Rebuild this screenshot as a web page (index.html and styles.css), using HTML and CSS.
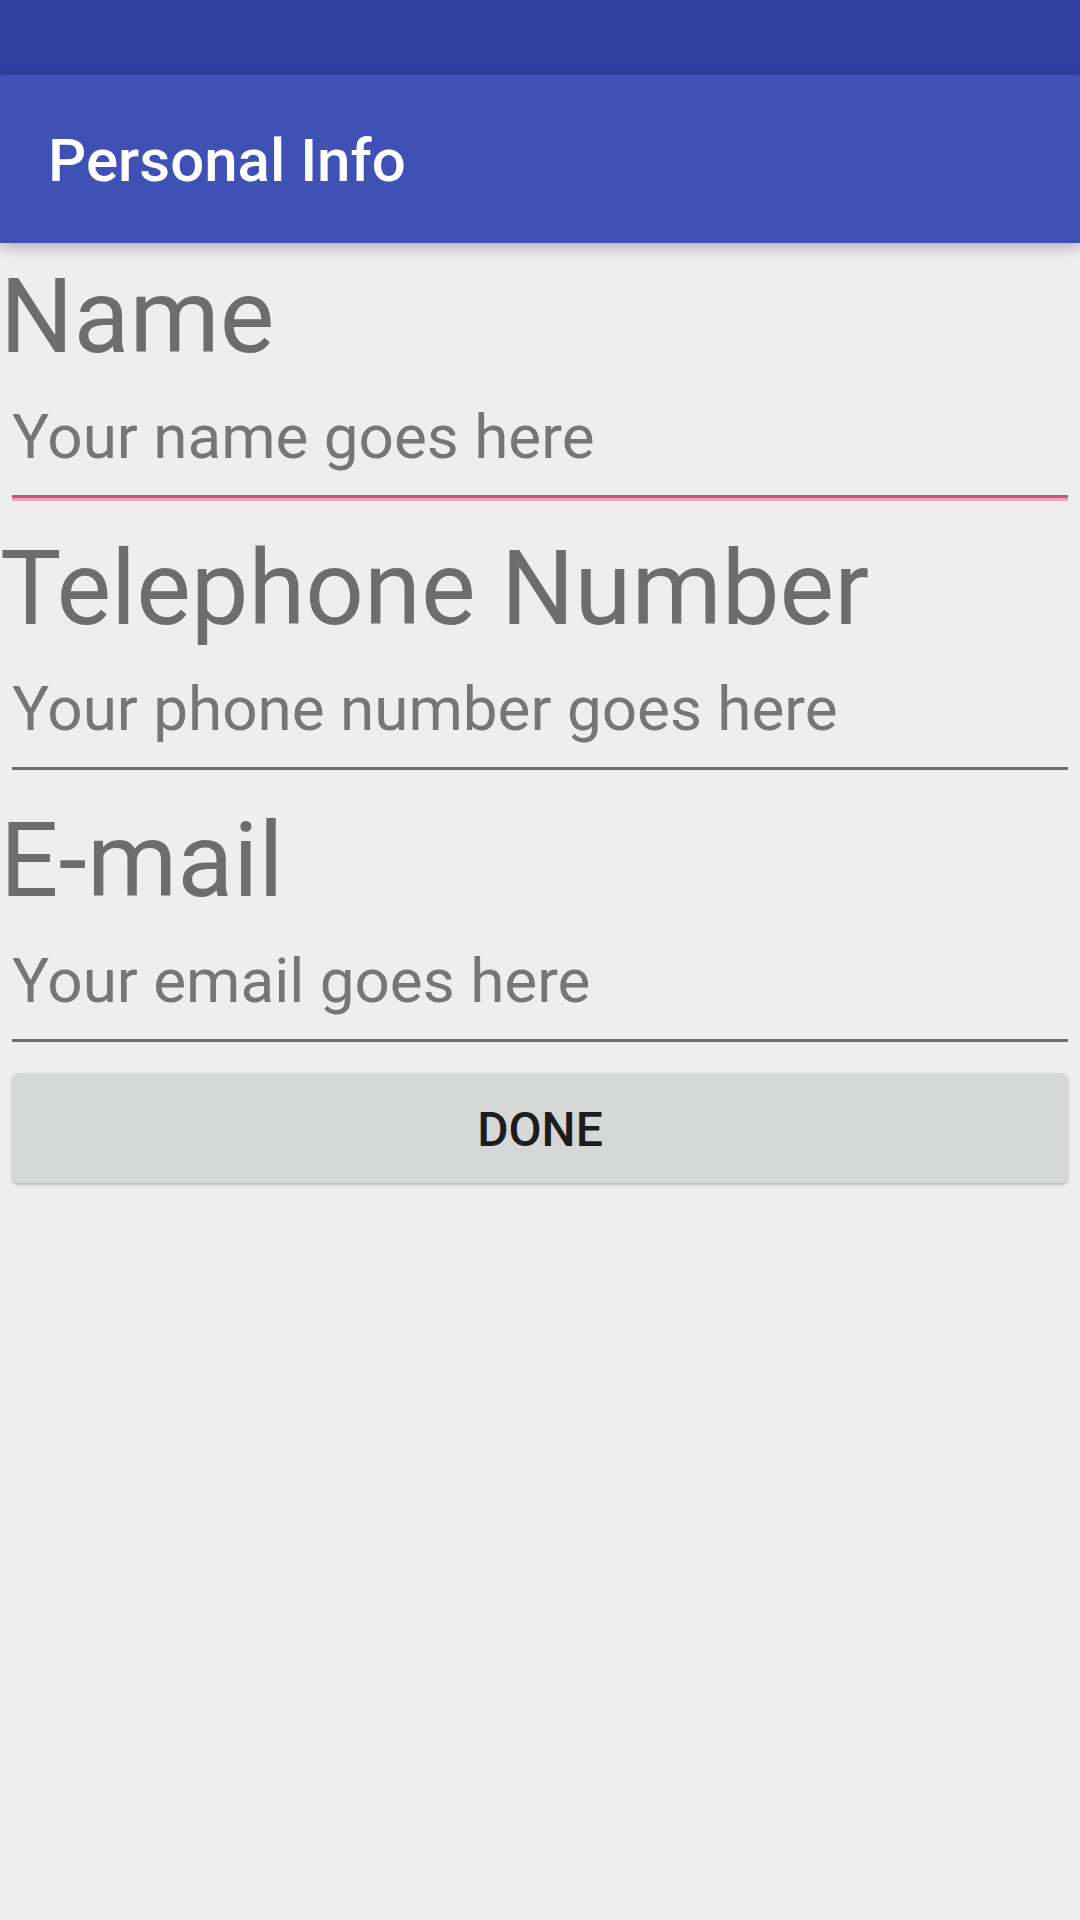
FILE: index.html
```html
<!DOCTYPE html>
<html>
<head>
<meta charset="utf-8">
<link rel="stylesheet" href="styles.css">
</head>
<body>
<div class="screen">
  <div class="statusbar"></div>
  <header class="appbar"><div class="appbar-title">Personal Info</div></header>
  <main class="content">
    <section class="field">
      <div class="label">Name</div>
      <div class="input focused"><span class="hint">Your name goes here</span></div>
    </section>
    <section class="field">
      <div class="label">Telephone Number</div>
      <div class="input"><span class="hint">Your phone number goes here</span></div>
    </section>
    <section class="field">
      <div class="label">E-mail</div>
      <div class="input"><span class="hint">Your email goes here</span></div>
    </section>
    <button class="done">DONE</button>
  </main>
</div>
</body>
</html>
```
FILE: styles.css
```css
html, body {
  margin: 0;
  padding: 0;
}
body {
  background: #eeeeee;
  font-family: Roboto, "Noto Sans", "Liberation Sans", sans-serif;
}
.screen {
  width: 1080px;
  height: 1920px;
  background: #eeeeee;
  overflow: hidden;
}
.statusbar {
  height: 75px;
  background: #303f9f;
}
.appbar {
  height: 168px;
  box-sizing: border-box;
  padding: 3px 0 0 48px;
  background: #3f51b5;
  box-shadow: 0 4px 14px rgba(0, 0, 0, 0.28);
  position: relative;
  z-index: 1;
}
.appbar-title {
  color: #ffffff;
  font-size: 60px;
  font-weight: 500;
  line-height: 165px;
}
.content {
  display: flex;
  flex-direction: column;
}
.field {
  display: flex;
  flex-direction: column;
  margin-bottom: 17px;
}
.label {
  font-size: 103px;
  line-height: 148px;
  height: 146px;
  color: #6d6d6d;
  white-space: nowrap;
}
.input {
  margin: 0 12px;
  height: 109px;
  box-sizing: border-box;
  padding-top: 10px;
  border-bottom: 3px solid #6e6e6e;
}
.input.focused {
  border-bottom-color: #bb5a80;
  box-shadow: 0 3px 0 #f5a1bc;
}
.hint {
  display: block;
  font-size: 62px;
  line-height: 76px;
  color: #767676;
  white-space: nowrap;
}
.done {
  margin: 14px 12px 0;
  height: 110px;
  box-sizing: border-box;
  padding: 4px 0 0;
  border: none;
  border-radius: 6px;
  background: #d6d7d7;
  box-shadow: 0 2px 3px rgba(0, 0, 0, 0.22);
  font-family: Roboto, "Noto Sans", "Liberation Sans", sans-serif;
  font-size: 48px;
  font-weight: 500;
  line-height: 106px;
  color: #1d1d1d;
}
```
